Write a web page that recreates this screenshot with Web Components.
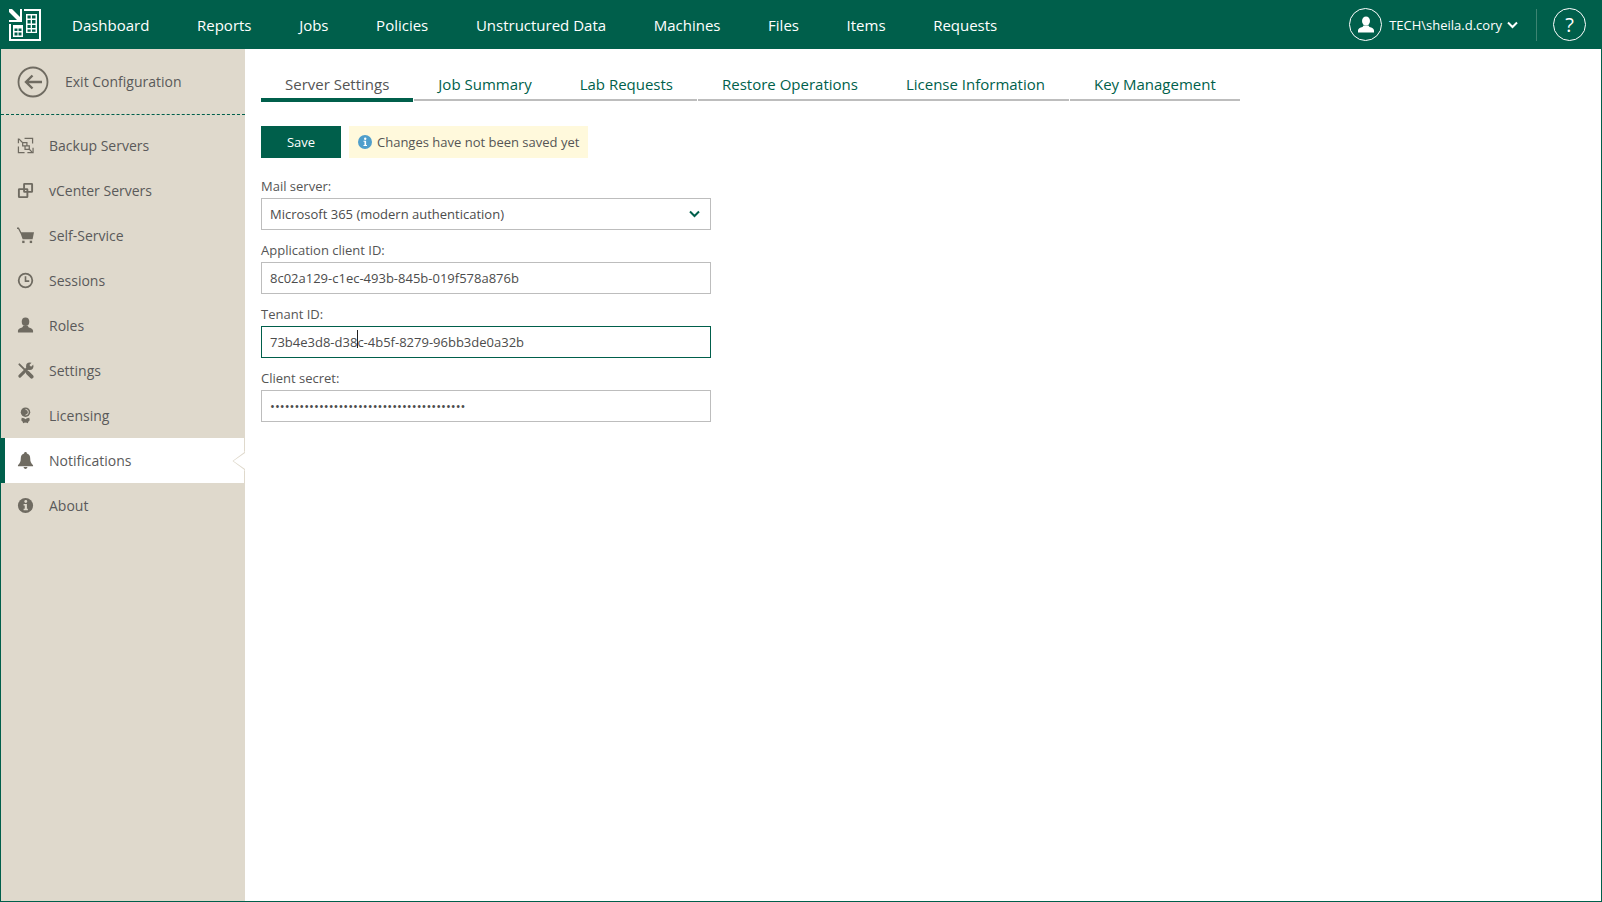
<!DOCTYPE html>
<html>
<head>
<meta charset="utf-8">
<title>Configuration</title>
<style>
  html, body { margin: 0; height: 100%; }
  body { font-family: "Open Sans", sans-serif; font-size: 14px; color: #4c4c4c; overflow: hidden; }
</style>
</head>
<body>
<app-shell>
  <top-bar slot="top"></top-bar>
  <side-menu slot="side"></side-menu>
  <server-settings></server-settings>
</app-shell>

<script>
const GREEN = "#005f4b";
const SAND = "#dfd9cc";

const ICONS = {
  backup: `<g fill="none" stroke="currentColor" stroke-width="1.300"><path d="M8 1.500h8.500V7M1.500 10v6.500H8M11 16.500h6v-5M1.500 6.500V1.500"/><path d="M6 6h4.500v3.500H6zM8.500 9.500H13V13H8.500z"/><path d="M2 2l3.500 3.500M12.500 12.500l4 4"/></g>`,
  vcenter: `<path fill-rule="evenodd" fill="currentColor" d="M8 1h7.500A1.500 1.500 0 0 1 17 2.500V10a1.500 1.500 0 0 1-1.500 1.500H12V15.500A1.500 1.500 0 0 1 10.500 17H2.500A1.500 1.500 0 0 1 1 15.500V8a1.500 1.500 0 0 1 1.500-1.500H6.500V2.500A1.500 1.500 0 0 1 8 1zM8.500 3v3.500h2A1.500 1.500 0 0 1 12 8v1.500h3V3zM3 8.500V15h7v-3.500H8A1.500 1.500 0 0 1 6.500 10V8.500zM8.500 8.500V9.500H10V8.500z"/>`,
  cart: `<path fill="currentColor" d="M0 .5h2l2.500 5H18l-1.500 7.500H6L4 7.500 1.200 2H0z"/><rect x="5.500" y="14.500" width="2.500" height="2.500" fill="currentColor"/><rect x="13.500" y="14.500" width="2.500" height="2.500" fill="currentColor"/>`,
  clock: `<circle cx="9" cy="9" r="7.200" fill="none" stroke="currentColor" stroke-width="1.900"/><path fill="none" stroke="currentColor" stroke-width="1.700" d="M9 4.500V9.700H13"/>`,
  person: `<ellipse cx="9" cy="5" rx="4" ry="4.500" fill="currentColor"/><path fill="currentColor" d="M6.500 9.500h5l1 1.500c2.500.6 4.500 1.700 4.500 3.500V16.500H1v-2c0-1.800 2-2.900 4.500-3.500z"/>`,
  tools: `<g fill="none" stroke="currentColor" stroke-linecap="round"><path stroke-width="2" d="M2.500 2.500L10 10"/><path stroke-width="4" d="M11.500 11.500l4 4"/><path stroke-width="3.200" d="M3 15L11 7"/></g><circle cx="13.500" cy="4.500" r="3.900" fill="currentColor"/><path stroke="${SAND}" stroke-width="2.600" d="M14 4L18 0"/>`,
  award: `<circle cx="9" cy="5.500" r="5" fill="currentColor"/><path fill="none" stroke="${SAND}" stroke-width="1" d="M9 2.500a3 3 0 0 1 0 6"/><path fill="currentColor" d="M5 11.500l2.500 .5 1.500 1 1.500-1 2.500-.5.500 2.500-1.500 1.500-.5 1.800-2-.9-.5.400-.5-.400-2 .9-.5-1.800L4.500 14z"/>`,
  bell: `<path fill="currentColor" d="M9 0c1 0 1.500.7 1.500 1.500 2.500.7 3.500 2.700 3.500 5.500 0 3.500.9 5 3 7v1H1v-1c2.100-2 3-3.500 3-7 0-2.800 1-4.800 3.500-5.500C7.500.7 8 0 9 0zM7 16h4c0 1.200-.9 2-2 2s-2-.8-2-2z"/>`,
  info: `<circle cx="9" cy="9" r="8" fill="currentColor"/><circle cx="9.300" cy="4.800" r="1.500" fill="${SAND}"/><path fill="${SAND}" d="M7 7.500h3.500V12.500H11.500V14H7V12.500H8.200V9H7z"/>`
};

class AppShell extends HTMLElement {
  constructor() {
    super();
    this.attachShadow({ mode: "open" });
    this.shadowRoot.innerHTML = `
      <style>
        :host {
          display: flex;
          flex-direction: column;
          height: 902px;
          box-sizing: border-box;
          border: 1px solid ${GREEN};
          border-top: none;
        }
        .body { flex: 1; display: flex; min-height: 0; }
        .main { flex: 1; min-width: 0; padding: 0 16px; }
        ::slotted(top-bar) { margin: 0 -1px; }
      </style>
      <slot name="top"></slot>
      <div class="body">
        <slot name="side"></slot>
        <div class="main"><slot></slot></div>
      </div>
    `;
  }
}

class TopBar extends HTMLElement {
  constructor() {
    super();
    this.attachShadow({ mode: "open" });
    const items = ["Dashboard", "Reports", "Jobs", "Policies", "Unstructured Data", "Machines", "Files", "Items", "Requests"];
    this.shadowRoot.innerHTML = `
      <style>
        :host {
          display: flex;
          align-items: center;
          height: 49px;
          flex: none;
          background: ${GREEN};
          color: #fff;
          font-size: 15px;
        }
        .logo { width: 32px; height: 32px; margin: 0 0 0 9px; flex: none; display: block; }
        nav { display: flex; gap: 47.600px; margin-left: 31px; flex: 1; }
        .user { display: flex; align-items: center; font-size: 13px; }
        .ring {
          width: 33px; height: 33px; box-sizing: border-box;
          border: 1.500px solid #fff; border-radius: 50%;
          display: flex; align-items: center; justify-content: center;
        }
        .user .name { margin: 1px 5px 0 7px; }
        .sep { width: 1px; height: 32px; background: #3d8472; margin: 0 16px 0 18px; }
        .help { font-size: 20px; margin-right: 16px; line-height: 1; }
      </style>
      <svg class="logo" viewBox="0 0 32 32" fill="#fff">
        <path d="M0 0h3l8 8V0h2v13H0v-2h8L0 3z"/>
        <path d="M15 0h17v32H0V15h2v15h28V2H15z"/>
        <path fill-rule="evenodd" d="M17 5h11v19H17zM18.500 6.500v3h3.200v-3zM23 6.500v3h3.500v-3zM18.500 11v3.500h3.200V11zM23 11v3.500h3.500V11zM18.500 16v3h3.200v-3zM23 16v3h3.500v-3zM18.500 20.500v2.200h3.200v-2.200zM23 20.500v2.200h3.500v-2.200z"/>
        <path fill-rule="evenodd" d="M4 16h10v12H4zM5.500 19.500v2.500h3v-2.500zM9.500 19.500v2.500h3v-2.500zM5.500 23.500v3h3v-3zM9.500 23.500v3h3v-3z"/>
      </svg>
      <nav>${items.map((t) => `<span>${t}</span>`).join("")}</nav>
      <div class="user">
        <span class="ring">
          <svg width="18" height="18" viewBox="0 0 18 18">${ICONS.person}</svg>
        </span>
        <span class="name">TECH\\sheila.d.cory</span>
        <svg width="11" height="8" viewBox="0 0 11 8"><path d="M1 1.500l4.500 4.500 4.500-4.500" fill="none" stroke="#fff" stroke-width="2"/></svg>
      </div>
      <span class="sep"></span>
      <span class="ring help">?</span>
    `;
  }
}

class SideMenu extends HTMLElement {
  constructor() {
    super();
    this.attachShadow({ mode: "open" });
    const items = [
      ["backup", "Backup Servers"],
      ["vcenter", "vCenter Servers"],
      ["cart", "Self-Service"],
      ["clock", "Sessions"],
      ["person", "Roles"],
      ["tools", "Settings"],
      ["award", "Licensing"],
      ["bell", "Notifications", true],
      ["info", "About"]
    ];
    this.shadowRoot.innerHTML = `
      <style>
        :host {
          display: block;
          width: 244px;
          flex: none;
          background: ${SAND};
          color: #5a5a5a;
          font-size: 14px;
        }
        .exit {
          height: 66px; box-sizing: border-box;
          display: flex; align-items: center;
          padding-left: 16px;
          border-bottom: 1px dashed ${GREEN};
          margin-bottom: 8px;
        }
        .exit svg { display: block; margin-right: 16px; }
        .item {
          position: relative;
          height: 45px;
          display: flex; align-items: center;
          padding-left: 16px;
        }
        .item svg { color: #6f6b61; display: block; margin-right: 15px; flex: none; }
        .item.active { background: #fff; margin-left: -1px; padding-left: 12px; border-left: 5px solid ${GREEN}; margin-right: 1px; }
        .item .notch { position: absolute; right: -1px; top: 13px; margin: 0; }
      </style>
      <div class="exit">
        <svg width="32" height="32" viewBox="0 0 32 32" fill="none" stroke="#6f6b61">
          <circle cx="16" cy="16" r="14.500" stroke-width="1.800"/>
          <path d="M25 16H9M15.500 9.500L9 16l6.500 6.500" stroke-width="2.400"/>
        </svg>
        <span>Exit Configuration</span>
      </div>
      ${items.map(([icon, text, active]) => `
        <div class="item ${active ? "active" : ""}">
          <svg width="17" height="17" viewBox="0 0 18 18">${ICONS[icon]}</svg>
          <span>${text}</span>
          ${active ? `<svg class="notch" width="13" height="20" viewBox="0 0 13 20"><path d="M13 0v20L1 10z" fill="#fff"/><path d="M13 2L1.500 10 13 18v2H12.500V19L0.500 10 12.500 1V0H13z" fill="${SAND}"/></svg>` : ""}
        </div>`).join("")}
    `;
  }
}

class TabStrip extends HTMLElement {
  constructor() {
    super();
    this.attachShadow({ mode: "open" });
  }
  connectedCallback() {
    const items = this.getAttribute("items").split("|");
    this.shadowRoot.innerHTML = `
      <style>
        :host { display: flex; font-size: 15px; height: 53px; align-items: flex-end; }
        .tab {
          padding: 0 24px 3px;
          line-height: 24px;
          border-bottom: 2px solid #bdbdbd;
          margin-right: 1px;
          color: ${GREEN};
          height: 24px;
          margin-bottom: 1px;
        }
        .tab.join { margin-right: 0; }
        .tab.active { color: #555; border-bottom: 4px solid ${GREEN}; margin-bottom: 0; height: 23px; }
      </style>
      ${items.map((t, i) => `<div class="tab ${i === 0 ? "active" : ""} ${i === 1 || i === 3 ? "join" : ""}">${t}</div>`).join("")}
    `;
  }
}

class FormField extends HTMLElement {
  constructor() {
    super();
    this.attachShadow({ mode: "open" });
  }
  connectedCallback() {
    const focused = this.hasAttribute("focused");
    this.shadowRoot.innerHTML = `
      <style>
        :host { display: block; width: 450px; font-size: 13px; }
        .label { height: 18px; line-height: 18px; margin-bottom: 3px; color: #555; }
        .box {
          height: 32px; box-sizing: border-box;
          border: 1px solid ${focused ? GREEN : "#bdbdbd"};
          padding: 0 8px;
          display: flex; align-items: center; justify-content: space-between;
          color: #4c4c4c;
          line-height: 1;
        }
        .val { white-space: nowrap; }
      </style>
      <div class="label">${this.getAttribute("label")}</div>
      <div class="box"><span class="val"><slot></slot></span><slot name="end"></slot></div>
    `;
  }
}

class ServerSettings extends HTMLElement {
  constructor() {
    super();
    this.attachShadow({ mode: "open" });
    this.shadowRoot.innerHTML = `
      <style>
        :host { display: block; }
        .toolbar { display: flex; margin-top: 24px; margin-bottom: 19px; font-size: 13px; }
        .save {
          width: 80px; height: 32px; border: none;
          background: ${GREEN}; color: #fff;
          font: inherit; padding: 0;
          margin-right: 8px;
        }
        .note {
          display: flex; align-items: center;
          height: 32px; width: 239px; box-sizing: border-box;
          padding-left: 9px;
          background: #fff9dc; color: #555;
        }
        .note svg { display: block; margin-right: 5px; }
        .fields { display: grid; gap: 11px; }
        .caretwrap { position: relative; }
        .caret { position: absolute; left: 0; top: -3px; height: 18px; width: 1px; background: #222; }
      </style>
      <tab-strip items="Server Settings|Job Summary|Lab Requests|Restore Operations|License Information|Key Management"></tab-strip>
      <div class="toolbar">
        <button class="save">Save</button>
        <div class="note">
          <svg width="14" height="14" viewBox="0 0 14 14">
            <circle cx="7" cy="7" r="7" fill="#4f9ecb"/>
            <circle cx="7.200" cy="3.700" r="1.200" fill="#fff"/>
            <path d="M5.500 5.800h2.600v4.200H9v1H5.500v-1h1V6.800h-1z" fill="#fff"/>
          </svg>
          <span>Changes have not been saved yet</span>
        </div>
      </div>
      <div class="fields">
        <form-field label="Mail server:">Microsoft 365 (modern authentication)<svg slot="end" width="11" height="8" viewBox="0 0 11 8" style="margin-right:2px"><path d="M1 1.500l4.500 4.500 4.500-4.500" fill="none" stroke="${GREEN}" stroke-width="2"/></svg></form-field>
        <form-field label="Application client ID:">8c02a129-c1ec-493b-845b-019f578a876b</form-field>
        <form-field label="Tenant ID:" focused>73b4e3d8-d38<span class="caretwrap"><span class="caret"></span></span>c-4b5f-8279-96bb3de0a32b</form-field>
        <form-field label="Client secret:">${"•".repeat(40)}</form-field>
      </div>
    `;
  }
}

customElements.define("app-shell", AppShell);
customElements.define("top-bar", TopBar);
customElements.define("side-menu", SideMenu);
customElements.define("tab-strip", TabStrip);
customElements.define("form-field", FormField);
customElements.define("server-settings", ServerSettings);
</script>
</body>
</html>
